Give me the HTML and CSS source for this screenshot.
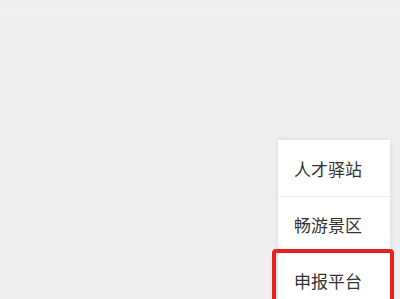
FILE: index.html
```html
<!DOCTYPE html>
<html lang="zh">
<head>
<meta charset="utf-8">
<link rel="stylesheet" href="styles.css">
</head>
<body>
<div class="page">
  <div class="topbar"></div>
  <div class="menu">
    <div class="item">人才驿站</div>
    <div class="item">畅游景区</div>
    <div class="item active">申报平台<span class="mark"></span></div>
  </div>
</div>
</body>
</html>
```
FILE: styles.css
```css
html, body {
  margin: 0;
  padding: 0;
  background: #efefef;
  overflow: hidden;
}
.page {
  width: 400px;
  height: 299px;
  overflow: hidden;
  display: flex;
  flex-direction: column;
  align-items: flex-end;
  font-family: "Noto Sans CJK SC", "Noto Sans", sans-serif;
}
.topbar {
  flex-shrink: 0;
  align-self: stretch;
  height: 6px;
  margin-top: 11px;
  background: #f0f0f0;
}
.menu {
  flex-shrink: 0;
  margin-top: 123px;
  margin-right: 10px;
  width: 112px;
  background: #fff;
  box-shadow: 0 0 6px rgba(0,0,0,0.10);
  display: flex;
  flex-direction: column;
}
.item {
  flex-shrink: 0;
  position: relative;
  height: 56px;
  display: flex;
  align-items: center;
  padding-left: 16px;
  font-size: 17px;
  color: #333;
  border-top: 1px solid #efefef;
  box-sizing: border-box;
}
.item:first-child {
  border-top: none;
}
.mark {
  position: absolute;
  left: -6px;
  right: -4px;
  top: -4px;
  height: 80px;
  border: 4px solid #e8231f;
  border-radius: 4px;
}
```
